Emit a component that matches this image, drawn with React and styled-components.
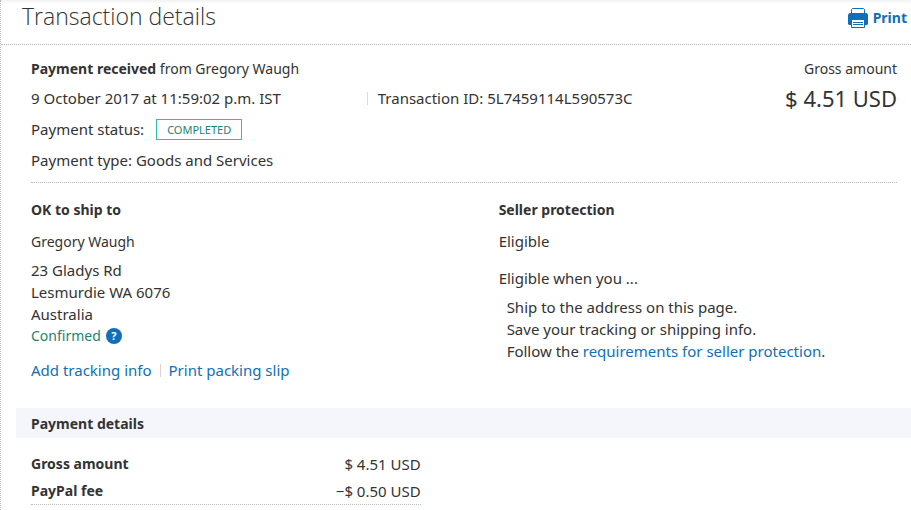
import React from 'react';
import styled, { createGlobalStyle } from 'styled-components';

const summary = [
    { label: 'Gross amount', value: '$ 4.51 USD' },
    { label: 'PayPal fee', value: '−$ 0.50 USD' },
];

const PrintIcon = () => (
    <svg width="20" height="20" viewBox="0 0 20 20" aria-hidden="true">
        <path d="M3.5 6V1.5L4.5 .5H15.5L16.5 1.5V6" fill="#fff" stroke="#0f70b7" />
        <path d="M1.5 5H18.5L20 6.5V16L19 17H1L0 16V6.5Z" fill="#0f70b7" />
        <path d="M3.5 11.5H16.5V19.5H3.5Z" fill="#fff" stroke="#0f70b7" />
        <path d="M5 14.5H15M5 16.5H15" stroke="#0f70b7" />
    </svg>
);

const App = () => {
    return (
        <>
            <GlobalStyle />
            <Page>
                <Header>
                    <Title>Transaction details</Title>
                    <PrintButton type="button">
                        <PrintIcon />
                        Print
                    </PrintButton>
                </Header>
                <Overview>
                    <Facts>
                        <Line $small>
                            <strong>Payment received</strong> from Gregory Waugh
                        </Line>
                        <DateLine>
                            <span>9 October 2017 at 11:59:02 p.m. IST</span>
                            <TransactionId>Transaction ID: 5L7459114L590573C</TransactionId>
                        </DateLine>
                        <StatusLine>
                            Payment status: <Badge>Completed</Badge>
                        </StatusLine>
                        <Line>Payment type: Goods and Services</Line>
                    </Facts>
                    <Gross>
                        <Line $small>Gross amount</Line>
                        <Amount>$ 4.51 USD</Amount>
                    </Gross>
                </Overview>
                <Columns>
                    <section>
                        <Heading>OK to ship to</Heading>
                        <Line $small $top={10}>Gregory Waugh</Line>
                        <Address>
                            23 Gladys Rd
                            <br />
                            Lesmurdie WA 6076
                            <br />
                            Australia
                        </Address>
                        <Confirmed>
                            Confirmed
                            <Help type="button" aria-label="About confirmed addresses">?</Help>
                        </Confirmed>
                        <Actions>
                            <Link href="#tracking">Add tracking info</Link>
                            <Divider />
                            <Link href="#packing-slip">Print packing slip</Link>
                        </Actions>
                    </section>
                    <section>
                        <Heading>Seller protection</Heading>
                        <Line $top={9}>Eligible</Line>
                        <Line $top={15}>Eligible when you ...</Line>
                        <Conditions>
                            <li>Ship to the address on this page.</li>
                            <li>Save your tracking or shipping info.</li>
                            <li>
                                Follow the <Link href="#requirements">requirements for seller protection</Link>.
                            </li>
                        </Conditions>
                    </section>
                </Columns>
                <Band>Payment details</Band>
                <Totals>
                    <Summary>
                        <tbody>
                            {summary.map((row) => (
                                <tr key={row.label}>
                                    <th scope="row">{row.label}</th>
                                    <td>{row.value}</td>
                                </tr>
                            ))}
                        </tbody>
                    </Summary>
                </Totals>
            </Page>
        </>
    );
};

export default App;

const GlobalStyle = createGlobalStyle`
  * {
    box-sizing: border-box;
  }
  body {
    margin: 0;
    background: #fff;
    color: #333;
    font: 15px/22px "Noto Sans", "Open Sans", sans-serif;
  }
`;
const Page = styled.main`
  min-height: 100vh;
  padding-bottom: 5px;
  border-left: 1px dotted #bbb;
`;
const Header = styled.header`
  display: flex;
  justify-content: space-between;
  align-items: flex-start;
  height: 45px;
  padding: 0 4px 0 21px;
  border-bottom: 1px dotted #bbb;
  background: linear-gradient(#f2f2f2, #fff 4px);
`;
const Title = styled.h1`
  margin: 0;
  font-family: "Open Sans", sans-serif;
  font-size: 23px;
  font-weight: 300;
  line-height: 32px;
`;
const PrintButton = styled.button`
  display: flex;
  align-items: center;
  gap: 5px;
  padding: 7px 0 0;
  border: 0;
  background: none;
  color: #0f70b7;
  font: inherit;
  font-size: 14px;
  font-weight: 700;
  cursor: pointer;
`;
const Overview = styled.section`
  display: flex;
  justify-content: space-between;
  gap: 8px;
  margin: 0 14px 0 30px;
  padding: 13px 0 11px;
  border-bottom: 1px dotted #bbb;
`;
const Facts = styled.div`
  display: flex;
  flex: 1;
  flex-direction: column;
  gap: 8px;
`;
const Line = styled.p`
  margin: ${({ $top = 0 }) => $top}px 0 0;
  font-size: ${({ $small }) => ($small ? 14 : 15)}px;
`;
const DateLine = styled.div`
  display: grid;
  grid-template-columns: 45% 1fr;
  line-height: 21px;
`;
const TransactionId = styled.span`
  display: flex;
  align-items: center;

  &::before {
    content: "";
    height: 13px;
    margin-right: 10px;
    border-left: 1px solid #e6d8cf;
  }
`;
const StatusLine = styled.div`
  display: flex;
  align-items: center;
  gap: 12px;
  height: 24px;
`;
const Badge = styled.span`
  padding: 0 10px;
  border: 1px solid #2dc498;
  color: #1c8370;
  font-size: 11px;
  line-height: 19px;
  text-transform: uppercase;
`;
const Gross = styled.div`
  text-align: right;
`;
const Amount = styled.p`
  margin: 4px 0 0;
  font-size: 22px;
  line-height: 28px;
`;
const Columns = styled.div`
  display: grid;
  grid-template-columns: 54% 1fr;
  margin: 0 14px 0 30px;
  padding: 16px 0 27px;
`;
const Heading = styled.h2`
  margin: 0;
  font-size: 14px;
  font-weight: 700;
`;
const Address = styled.address`
  margin-top: 6px;
  font-style: normal;
`;
const Confirmed = styled.div`
  display: flex;
  align-items: center;
  gap: 5px;
  color: #1c8370;
  font-size: 14px;
`;
const Help = styled.button`
  width: 16px;
  height: 16px;
  padding: 0;
  border: 0;
  border-radius: 50%;
  background: #0f70b7;
  color: #fff;
  font: 700 11px/16px "Noto Sans", sans-serif;
  cursor: pointer;
`;
const Actions = styled.div`
  display: flex;
  align-items: center;
  gap: 8px;
  margin-top: 12px;
`;
const Divider = styled.span`
  height: 13px;
  border-left: 1px solid #ddd2cc;
`;
const Link = styled.a`
  color: #0f70b7;
  text-decoration: none;
`;
const Conditions = styled.ul`
  margin: 7px 0 0;
  padding: 0 0 0 8px;
  list-style: none;
`;
const Band = styled.h2`
  margin: 0 0 12px 15px;
  padding: 5px 15px 3px;
  background: #f5f6fb;
  font-size: 14px;
  font-weight: 700;
`;
const Totals = styled.section`
  margin: 0 14px 0 30px;
`;
const Summary = styled.table`
  width: 45%;
  border-bottom: 1px dotted #bbb;
  border-spacing: 0;

  th,
  td {
    height: 27px;
    padding: 0;
  }
  th {
    font-size: 14px;
    text-align: left;
  }
  td {
    text-align: right;
  }
`;
